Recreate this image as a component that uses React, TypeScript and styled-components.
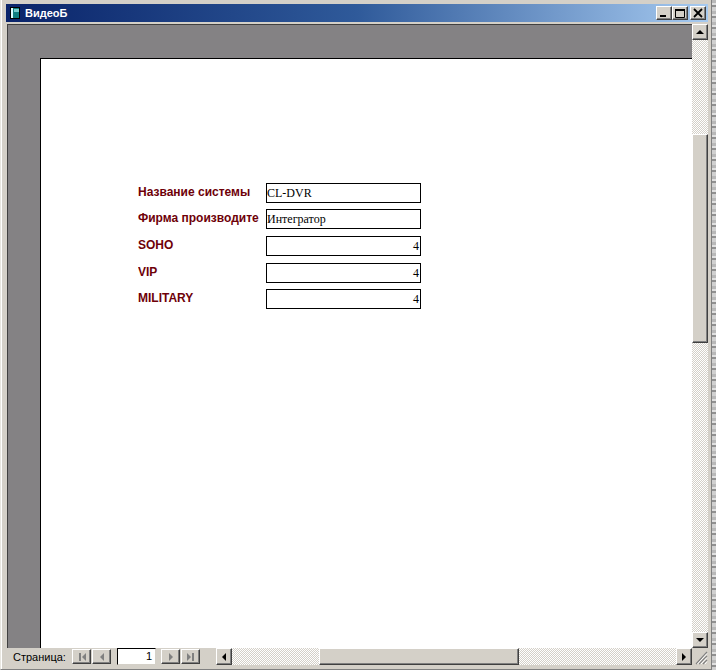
import React from "react";
import styled, { createGlobalStyle } from "styled-components";

const Global = createGlobalStyle`
  html, body { margin: 0; padding: 0; background: #d4d0c8; }
  body { width: 716px; height: 670px; overflow: hidden; }
  * { box-sizing: border-box; }
`;

const Screen = styled.div`
  width: 716px; height: 670px; display: flex; background: #d4d0c8; overflow: hidden;
`;
const Frame = styled.div`
  width: 712px; height: 670px; display: flex; flex-direction: column;
  background: #d4d0c8; padding: 4px 3px 4px 6px;
  border-left: 1px solid #e8e6e0; border-right: 1px solid #808080; border-bottom: 1px solid #808080;
  box-shadow: inset 1px 0 0 #fff;
`;
const EdgeStrip = styled.div`
  width: 4px; height: 670px;
  background: repeating-linear-gradient(180deg, #b8b8b8 0 3px, #e0e0e0 3px 5px, #909090 5px 7px, #d0d0d0 7px 11px);
`;
const TitleBar = styled.div`
  height: 18px; margin-left: -1px; flex: none; display: flex; align-items: center; padding: 0 2px 0 3px;
  background: linear-gradient(90deg, #0a246a 0%, #2f5a9a 50%, #a6caf0 100%);
`;
const AppIcon = styled.svg`width: 12px; height: 14px; flex: none;`;
const Title = styled.span`
  margin-left: 4px; color: #fff; font: bold 11px "Liberation Sans", Arial, sans-serif; flex: 1;
`;
const WinButtons = styled.div`display: flex; align-items: center;`;
const bevel = `
  background: #d4d0c8;
  border: 1px solid;
  border-color: #fff #404040 #404040 #fff;
  box-shadow: inset -1px -1px 0 #808080;
  display: flex; align-items: center; justify-content: center; padding: 0; flex: none;
`;
const WinButton = styled.div<{ $gap?: number }>`
  ${bevel}
  width: 16px; height: 14px; margin-left: ${(p) => p.$gap ?? 0}px;
`;
const Body = styled.div`
  flex: 1; min-height: 0; display: flex; margin-top: 2px;
`;
const Canvas = styled.div`
  flex: 1; min-width: 0; background: #848284; padding: 33px 0 0 32px; overflow: hidden;
  border-top: 1px solid #404040; border-left: 1px solid #404040;
`;
const Page = styled.div`
  background: #fff; height: 100%; border-top: 1px solid #000; border-left: 1px solid #000;
  padding: 124px 0 0 97px;
  display: flex; flex-direction: column; gap: 6px;
`;
const Row = styled.div<{ $extra?: number }>`
  display: flex; align-items: center; height: 20px; margin-top: ${(p) => p.$extra ?? 0}px;
`;
const Label = styled.div`
  width: 128px; overflow: hidden; white-space: nowrap; margin-top: -3px;
  color: #6e0008; font: bold 12px "Liberation Sans", Arial, sans-serif;
`;
const Field = styled.div<{ $right?: boolean }>`
  width: 155px; height: 20px; border: 1px solid #000; background: #fff; color: #000;
  font: 12px/18px "Liberation Serif", "Times New Roman", serif; padding: 0 ${(p) => (p.$right ? "1px" : "0")} 0 0;
  text-align: ${(p) => (p.$right ? "right" : "left")}; overflow: hidden; white-space: nowrap;
`;
const dither = `
  background-color: #fff;
  background-image: repeating-conic-gradient(#d4d0c8 0 25%, #fff 0 50%);
  background-size: 2px 2px;
`;
const VScroll = styled.div`
  width: 16px; flex: none; display: flex; flex-direction: column; ${dither}
`;
const VTrack = styled.div`flex: 1; min-height: 0; padding-top: 94px;`;
const VThumb = styled.div`${bevel} width: 16px; height: 209px;`;
const Arrow = styled.div`${bevel} width: 16px; height: 16px;`;
const Bottom = styled.div`height: 17px; flex: none; display: flex; align-items: stretch; background: #d4d0c8;`;
const NavBar = styled.div`
  width: 209px; flex: none; display: flex; align-items: center; padding-left: 6px;
`;
const NavLabel = styled.span`
  width: 59px; color: #000; font: 11px "Liberation Sans", Arial, sans-serif;
`;
const NavButton = styled.div<{ $gap?: number }>`
  ${bevel} width: 19px; height: 15px; margin-left: ${(p) => p.$gap ?? 0}px;
`;
const PageInput = styled.div`
  width: 39px; height: 17px; margin-left: 6px; margin-right: 5px; background: #fff; flex: none;
  border: 1px solid; border-color: #000 #d4d0c8 #d4d0c8 #000;
  font: 11px/15px "Liberation Sans", Arial, sans-serif; text-align: right; padding-right: 3px; color: #000;
`;
const HScroll = styled.div`flex: 1; min-width: 0; display: flex; ${dither}`;
const HTrack = styled.div`flex: 1; min-width: 0; padding-left: 87px; display: flex;`;
const HThumb = styled.div`${bevel} width: 200px; height: 17px;`;
const HArrow = styled.div`${bevel} width: 16px; height: 17px;`;
const Grip = styled.svg`width: 16px; height: 17px; flex: none; background: #d4d0c8;`;

const rows = [
  { label: "Название системы", value: "CL-DVR" },
  { label: "Фирма производите", value: "Интегратор" },
  { label: "SOHO", value: "4", right: true, extra: 1 },
  { label: "VIP", value: "4", right: true, extra: 1 },
  { label: "MILITARY", value: "4", right: true },
];

const Tri = ({ d, c = "#000", w = 8, h = 8 }: { d: string; c?: string; w?: number; h?: number }) => (
  <svg width={w} height={h} viewBox="0 0 8 8"><path d={d} fill={c} /></svg>
);

export default function App() {
  return (
    <Screen>
      <Global />
      <Frame>
        <TitleBar>
          <AppIcon viewBox="0 0 12 14">
            <rect x="1.5" y="1.5" width="9" height="11" fill="#0f7f7f" stroke="#000" />
            <rect x="2" y="2" width="2" height="10" fill="#dff" />
            <rect x="5" y="3" width="5" height="3" fill="#7cc" />
          </AppIcon>
          <Title>ВидеоБ</Title>
          <WinButtons>
            <WinButton>
              <svg width="10" height="10" viewBox="0 0 10 10"><rect x="1" y="7" width="6" height="2" fill="#000" /></svg>
            </WinButton>
            <WinButton>
              <svg width="10" height="10" viewBox="0 0 10 10"><path d="M0.5 1.5h9v8h-9z" fill="none" stroke="#000" /><rect x="0" y="1" width="10" height="2" fill="#000" /></svg>
            </WinButton>
            <WinButton $gap={2}>
              <svg width="10" height="10" viewBox="0 0 10 10"><path d="M1 1l8 8M9 1l-8 8" stroke="#000" strokeWidth="1.8" /></svg>
            </WinButton>
          </WinButtons>
        </TitleBar>
        <Body>
          <Canvas>
            <Page>
              {rows.map((r) => (
                <Row key={r.label} $extra={r.extra}>
                  <Label>{r.label}</Label>
                  <Field $right={r.right}>{r.value}</Field>
                </Row>
              ))}
            </Page>
          </Canvas>
          <VScroll>
            <Arrow><Tri d="M4 2l4 4H0z" /></Arrow>
            <VTrack><VThumb /></VTrack>
            <Arrow><Tri d="M0 2h8L4 6z" /></Arrow>
          </VScroll>
        </Body>
        <Bottom>
          <NavBar>
            <NavLabel>Страница:</NavLabel>
            <NavButton><Tri c="#808080" d="M1 0h2v8H1zM8 0v8L4 4z" /></NavButton>
            <NavButton $gap={1}><Tri c="#808080" d="M6 0v8L2 4z" /></NavButton>
            <PageInput>1</PageInput>
            <NavButton><Tri c="#808080" d="M2 0v8l4-4z" /></NavButton>
            <NavButton $gap={1}><Tri c="#808080" d="M0 0v8l4-4zM5 0h2v8H5z" /></NavButton>
          </NavBar>
          <HScroll>
            <HArrow><Tri d="M6 0v8L2 4z" /></HArrow>
            <HTrack><HThumb /></HTrack>
            <HArrow><Tri d="M2 0v8l4-4z" /></HArrow>
          </HScroll>
          <Grip viewBox="0 0 16 17">
            <path d="M15 4L4 16M15 8l-8 8M15 12l-4 4" stroke="#808080" strokeWidth="1.2" />
            <path d="M15 5.5L5.5 16M15 9.5L9 16M15 13.5L13 16" stroke="#fff" strokeWidth="1" />
          </Grip>
        </Bottom>
      </Frame>
      <EdgeStrip />
    </Screen>
  );
}
